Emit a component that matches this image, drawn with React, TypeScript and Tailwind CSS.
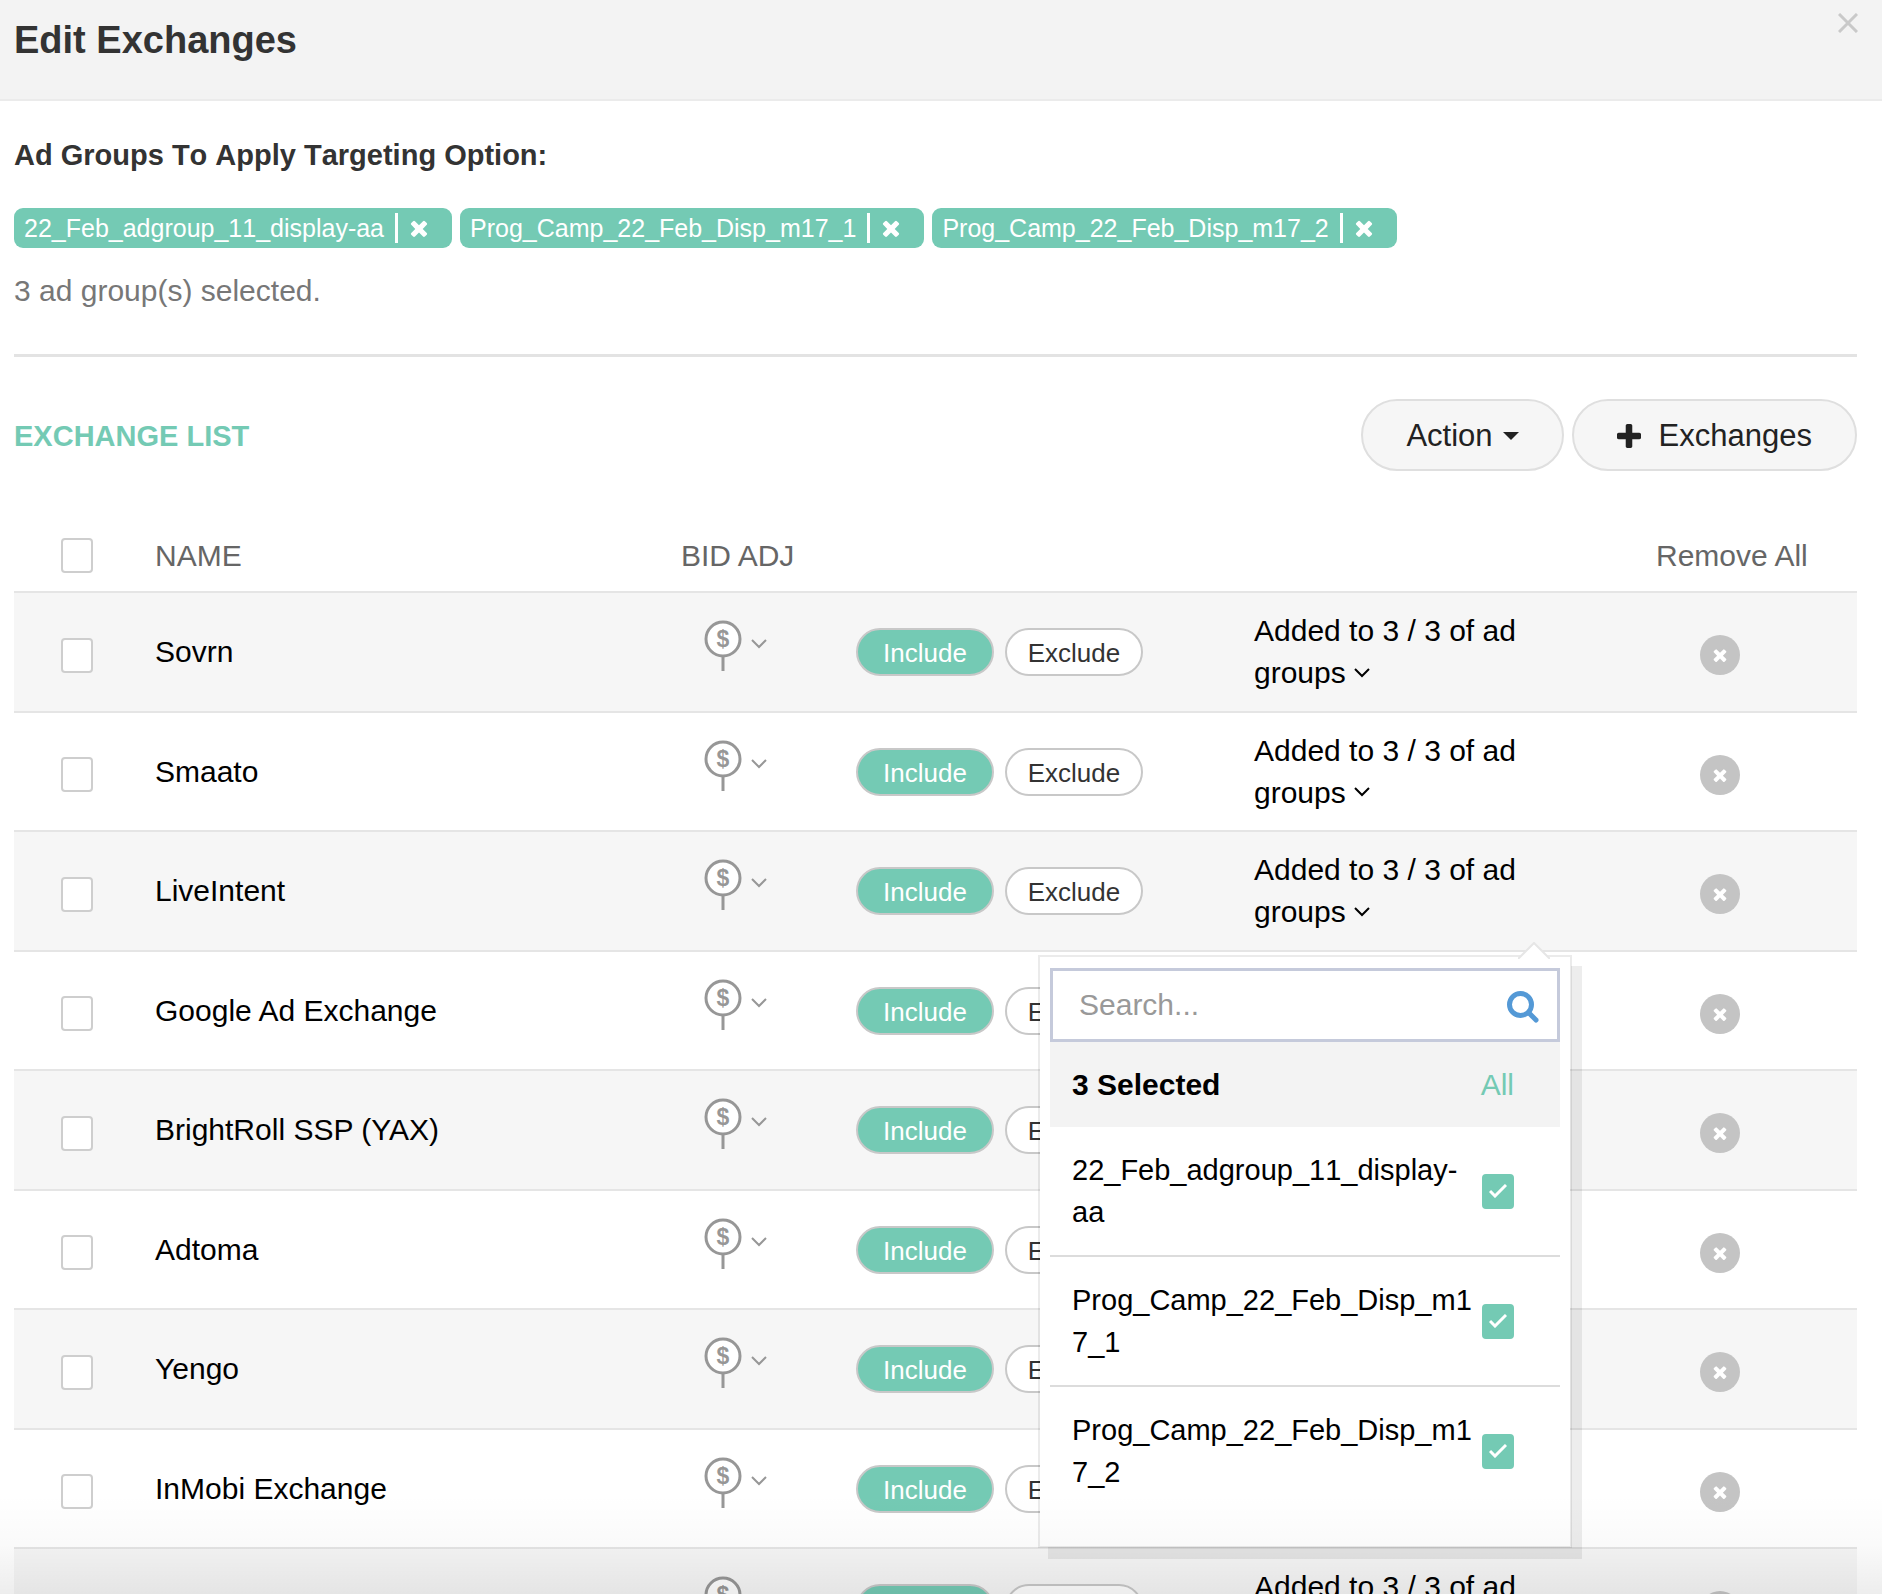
import React, { useState } from "react";
import clsx from "clsx";

const adGroups = [
  "22_Feb_adgroup_11_display-aa",
  "Prog_Camp_22_Feb_Disp_m17_1",
  "Prog_Camp_22_Feb_Disp_m17_2",
];

const exchanges = [
  "Sovrn",
  "Smaato",
  "LiveIntent",
  "Google Ad Exchange",
  "BrightRoll SSP (YAX)",
  "Adtoma",
  "Yengo",
  "InMobi Exchange",
  "OpenX",
];

const TimesIcon = ({ className }: { className?: string }) => (
  <svg viewBox="302 238 1188 1316" className={className} fill="currentColor" aria-hidden="true">
    <path d="M1490 1322q0 40-28 68l-136 136q-28 28-68 28t-68-28l-294-294-294 294q-28 28-68 28t-68-28l-136-136q-28-28-28-68t28-68l294-294-294-294q-28-28-28-68t28-68l136-136q28-28 68-28t68 28l294 294 294-294q28-28 68-28t68 28l136 136q28 28 28 68t-28 68l-294 294 294 294q28 28 28 68z" />
  </svg>
);

const PlusIcon = ({ className }: { className?: string }) => (
  <svg viewBox="192 128 1408 1408" className={className} fill="currentColor" aria-hidden="true">
    <path d="M1600 736v192q0 40-28 68t-68 28h-416v416q0 40-28 68t-68 28h-192q-40 0-68-28t-28-68v-416h-416q-40 0-68-28t-28-68v-192q0-40 28-68t68-28h416v-416q0-40 28-68t68-28h192q40 0 68 28t28 68v416h416q40 0 68 28t28 68z" />
  </svg>
);

const ChevronIcon = ({ className }: { className?: string }) => (
  <svg viewBox="0 0 16 10" className={className} fill="none" stroke="currentColor" strokeWidth="2" aria-hidden="true">
    <path d="M1 1l7 7 7-7" />
  </svg>
);

const BidPinIcon = () => (
  <svg viewBox="0 0 38 52" className="h-[52px] w-[38px]" aria-hidden="true">
    <circle cx="19" cy="19" r="17" fill="#fff" stroke="#979797" strokeWidth="3" />
    <path d="M19 36v15" stroke="#979797" strokeWidth="3" />
    <text x="19" y="27" textAnchor="middle" fontSize="23" fontWeight="700" fill="#979797">
      $
    </text>
  </svg>
);

const CheckBox = ({ label, checked = false }: { label: string; checked?: boolean }) => {
  const [on, setOn] = useState(checked);

  return (
    <span className="inline-grid shrink-0 place-items-center align-middle">
      <input
        type="checkbox"
        aria-label={label}
        checked={on}
        onChange={() => setOn(!on)}
        className="col-start-1 row-start-1 h-[35px] w-8 appearance-none rounded border-2 border-[#cecece] bg-white checked:border-[#74cab4] checked:bg-[#74cab4]"
      />
      {on && (
        <svg
          viewBox="0 0 18 14"
          className="pointer-events-none col-start-1 row-start-1 h-[14px] w-[18px]"
          fill="none"
          stroke="#fff"
          strokeWidth="3"
          aria-hidden="true"
        >
          <path d="M1 7l5 5L17 1" />
        </svg>
      )}
    </span>
  );
};

const AdGroupPopup = () => (
  <div className="absolute top-[106px] -right-[38px] z-10 w-[534px] border-2 border-black/8 bg-white bg-clip-padding px-[10px] pt-[11px] pb-[31px] shadow-[10px_11px_0_rgba(0,0,0,0.07)]">
    <svg viewBox="0 0 32 17" className="absolute -top-[15px] right-[20px] h-[17px] w-8" aria-hidden="true">
      <path d="M0 17L16 1l16 16" fill="#fff" stroke="#e6e6e6" strokeWidth="2" />
    </svg>

    {/* Search */}
    <div className="flex h-[74px] items-center border-[3px] border-[#c5cadb] bg-white pr-[18px] pl-[26px]">
      <input
        type="text"
        aria-label="Search ad groups"
        placeholder="Search..."
        className="min-w-0 flex-1 leading-[42px] outline-none placeholder:text-[#999]"
      />
      <svg viewBox="0 0 32 32" className="mt-1 h-8 w-8" fill="none" stroke="#5499d6" aria-hidden="true">
        <circle cx="13.500" cy="13.500" r="11" strokeWidth="5" />
        <path d="M22 22l7 7" strokeWidth="5" strokeLinecap="round" />
      </svg>
    </div>

    <div className="flex h-[85px] items-center justify-between bg-[#f3f3f3] pr-[46px] pl-[22px]">
      <span className="font-bold">3 Selected</span>
      <button className="text-[#74cab4]">All</button>
    </div>

    <ul>
      {adGroups.map((group) => (
        <li
          key={group}
          className="flex items-center justify-between border-b-2 border-[#dcdcdc] py-[22px] pr-[46px] pl-[22px] last:border-b-0"
        >
          <span className="w-[406px] text-[29px] break-words [font-kerning:none]">{group}</span>
          <CheckBox label={group} checked />
        </li>
      ))}
    </ul>
  </div>
);

const ExchangeRow = ({ name, open }: { name: string; open: boolean }) => {
  const [included, setIncluded] = useState(true);
  const pill = "h-12 w-[138px] rounded-full border-2 border-[#c8c8c8] pt-[2px] text-[26px]";

  return (
    <tr className="odd:h-[120px] odd:bg-[#f6f6f6] even:h-[119px] [&>td]:border-b-2 [&>td]:border-[#e5e5e5]">
      <td className="pt-[2px] pl-[47px]">
        <CheckBox label={`Select ${name}`} />
      </td>
      <td>{name}</td>
      <td className="pb-3">
        <button
          aria-label={`Bid adjustment for ${name}`}
          className="ml-[23px] flex items-center gap-[9px] align-middle text-[#979797]"
        >
          <BidPinIcon />
          <ChevronIcon className="mb-1 h-[10px] w-4" />
        </button>
      </td>
      <td>
        <div className="flex gap-[11px]">
          <button
            onClick={() => setIncluded(true)}
            className={clsx(pill, included ? "bg-[#74cab4] text-white" : "bg-white text-[#333]")}
          >
            Include
          </button>
          <button
            onClick={() => setIncluded(false)}
            className={clsx(pill, included ? "bg-white text-[#333]" : "bg-[#74cab4] text-white")}
          >
            Exclude
          </button>
        </div>
      </td>
      <td>
        <div className="relative w-[280px]">
          <button className="text-left">
            Added to 3 / 3 of ad groups <ChevronIcon className="mb-[5px] inline h-[10px] w-4" />
          </button>
          {open && <AdGroupPopup />}
        </div>
      </td>
      <td className="pt-[6px] pl-11">
        <button
          aria-label={`Remove ${name}`}
          className="flex h-10 w-10 items-center justify-center rounded-full bg-[#c4c4c4] text-white"
        >
          <TimesIcon className="h-[14px] w-[14px]" />
        </button>
      </td>
    </tr>
  );
};

const App = () => {
  return (
    <div className="relative h-screen overflow-hidden bg-white font-['Liberation_Sans',Arial,sans-serif] text-[30px] leading-[42px] text-black">
      {/* Header */}
      <header className="flex items-start justify-between border-b-2 border-[#ebebeb] bg-[#f3f3f3] pr-[24px] pb-[38px] pl-[14px]">
        <h1 className="pt-[19px] text-[38px] font-bold text-[#333]">Edit Exchanges</h1>
        <button aria-label="Close" className="mt-[13px]">
          <svg viewBox="0 0 20 20" className="h-5 w-5" stroke="#c9c9c9" strokeWidth="3" aria-hidden="true">
            <path d="M1 1l18 18M19 1L1 19" />
          </svg>
        </button>
      </header>

      <main className="pt-[33px] pr-[25px] pl-[14px]">
        <h2 className="text-[29px] font-bold text-[#333] [font-kerning:none]">Ad Groups To Apply Targeting Option:</h2>

        <div className="mt-8 flex gap-2">
          {adGroups.map((group) => (
            <span
              key={group}
              className="flex h-10 items-center rounded-[9px] bg-[#74cab4] pr-6 pl-[10px] text-[25px] text-white [font-kerning:none]"
            >
              {group}
              <button aria-label={`Remove ${group}`} className="ml-[11px] flex h-[30px] items-center border-l-[3px] border-white pl-3">
                <TimesIcon className="h-[18px] w-[18px]" />
              </button>
            </span>
          ))}
        </div>
        <p className="mt-[22px] text-[#777]">3 ad group(s) selected.</p>

        <hr className="mt-[42px] border-t-[3px] border-[#e3e3e3]" />

        {/* Exchange list */}
        <div className="mt-[42px] flex items-center justify-between">
          <h3 className="pt-[2px] text-[29px] font-bold text-[#74cab4]">EXCHANGE LIST</h3>
          <div className="flex gap-2 text-[31px] text-[#222]">
            <button className="flex h-[72px] items-center gap-[10px] rounded-full border-2 border-[#dfdfdf] bg-[#f6f6f6] px-[43px] pt-[2px]">
              Action
              <svg viewBox="0 0 16 8" className="h-2 w-4" fill="currentColor" aria-hidden="true">
                <path d="M0 0h16L8 8z" />
              </svg>
            </button>
            <button className="flex h-[72px] items-center gap-[18px] rounded-full border-2 border-[#dfdfdf] bg-[#f6f6f6] px-[43px] pt-[2px]">
              <PlusIcon className="h-6 w-6" />
              Exchanges
            </button>
          </div>
        </div>

        <table className="mt-[50px] w-full table-fixed border-separate border-spacing-0 text-left">
          <thead>
            <tr className="h-[72px] text-[#666] [&>th]:border-b-2 [&>th]:border-[#e5e5e5] [&>th]:font-normal">
              <th className="w-[141px] pb-[6px] pl-[47px]">
                <CheckBox label="Select all exchanges" />
              </th>
              <th>NAME</th>
              <th className="w-[175px]">BID ADJ</th>
              <th className="w-[398px]" aria-label="Include or exclude" />
              <th className="w-[402px]" aria-label="Ad groups" />
              <th className="w-[201px]">
                <button>Remove All</button>
              </th>
            </tr>
          </thead>
          <tbody>
            {exchanges.map((name) => (
              <ExchangeRow key={name} name={name} open={name === "LiveIntent"} />
            ))}
          </tbody>
        </table>
      </main>

      {/* Scroll fade at the bottom edge */}
      <div className="pointer-events-none absolute inset-x-0 bottom-0 z-20 h-[100px] bg-linear-to-b from-transparent via-black/2 to-black/7" />
    </div>
  );
};

export default App;
